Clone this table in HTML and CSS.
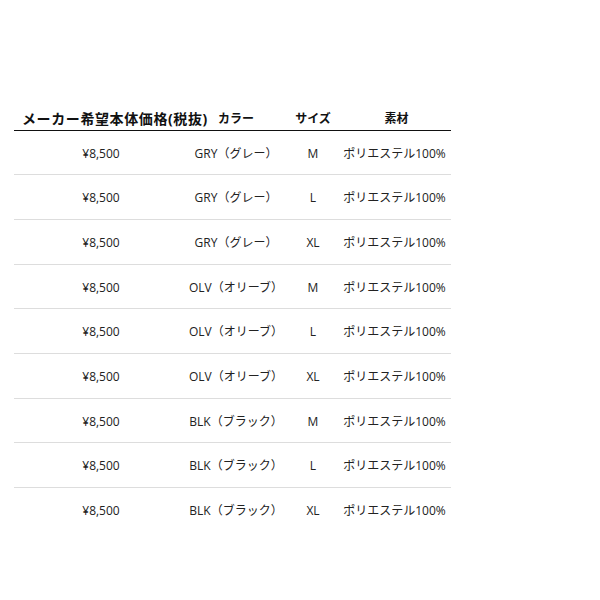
FILE: index.html
```html
<!DOCTYPE html>
<html lang="ja">
<head>
<meta charset="utf-8">
<link rel="stylesheet" href="styles.css">
</head>
<body>
<div class="page">
  <table class="spec">
    <colgroup>
      <col class="c1"><col class="c2"><col class="c3"><col class="c4">
    </colgroup>
    <thead>
      <tr>
        <th class="first">メーカー希望本体価格(税抜)</th>
        <th>カラー</th>
        <th>サイズ</th>
        <th>素材</th>
      </tr>
    </thead>
    <tbody>
      <tr><td class="price">¥8,500</td><td>GRY（グレー）</td><td>M</td><td class="mat">ポリエステル100%</td></tr>
      <tr><td class="price">¥8,500</td><td>GRY（グレー）</td><td>L</td><td class="mat">ポリエステル100%</td></tr>
      <tr><td class="price">¥8,500</td><td>GRY（グレー）</td><td>XL</td><td class="mat">ポリエステル100%</td></tr>
      <tr><td class="price">¥8,500</td><td>OLV（オリーブ）</td><td>M</td><td class="mat">ポリエステル100%</td></tr>
      <tr><td class="price">¥8,500</td><td>OLV（オリーブ）</td><td>L</td><td class="mat">ポリエステル100%</td></tr>
      <tr><td class="price">¥8,500</td><td>OLV（オリーブ）</td><td>XL</td><td class="mat">ポリエステル100%</td></tr>
      <tr><td class="price">¥8,500</td><td>BLK（ブラック）</td><td>M</td><td class="mat">ポリエステル100%</td></tr>
      <tr><td class="price">¥8,500</td><td>BLK（ブラック）</td><td>L</td><td class="mat">ポリエステル100%</td></tr>
      <tr><td class="price">¥8,500</td><td>BLK（ブラック）</td><td>XL</td><td class="mat">ポリエステル100%</td></tr>
    </tbody>
  </table>
</div>
</body>
</html>
```
FILE: styles.css
```css
html, body {
  margin: 0;
  padding: 0;
  background: #fff;
}
body {
  font-family: "Open Sans", "Noto Sans CJK JP", sans-serif;
  font-size: 12px;
  color: #222;
}
.page {
  padding: 108px 0 0 14px;
}
.spec {
  width: 437px;
  border-collapse: collapse;
  table-layout: fixed;
}
.c1 { width: 174px; }
.c2 { width: 96px; }
.c3 { width: 58px; }
.c4 { width: 109px; }
.spec th {
  font-weight: bold;
  line-height: 21.6px;
  padding: 0;
  text-align: center;
  white-space: nowrap;
  border-bottom: 1px solid #111;
  color: #111;
}
.spec th.first {
  text-align: left;
  padding-left: 8px;
  font-size: 14px;
  letter-spacing: 0.6px;
  overflow: visible;
}
.spec td {
  line-height: 21.6px;
  padding: 12px 0 10.1px;
  text-align: center;
  white-space: nowrap;
  border-bottom: 1px solid #ddd;
}
.spec tbody tr:last-child td {
  border-bottom: none;
}
.spec td.mat {
  padding-right: 4px;
}
```
